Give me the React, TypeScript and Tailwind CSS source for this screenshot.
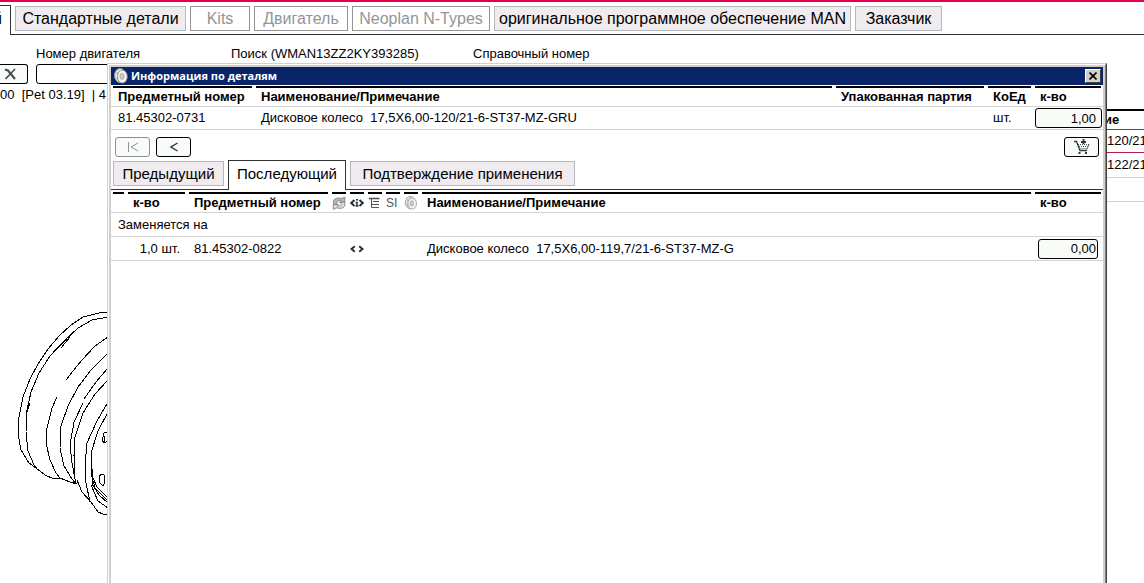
import React, { useState } from 'react';

interface TabItem {
    label: string;
    width: string;
    disabled?: boolean;
}

const mainTabs: TabItem[] = [
    { label: 'Стандартные детали', width: 'w-[171px]' },
    { label: 'Kits', width: 'w-[60px]', disabled: true },
    { label: 'Двигатель', width: 'w-[94px]', disabled: true },
    { label: 'Neoplan N-Types', width: 'w-[138px]', disabled: true },
    { label: 'оригинальное программное обеспечение MAN', width: 'w-[357px]' },
    { label: 'Заказчик', width: 'w-[87px]' },
];

const dialogTabs: TabItem[] = [
    { label: 'Предыдущий', width: 'w-[111px]' },
    { label: 'Последующий', width: 'w-[118px]' },
    { label: 'Подтверждение применения', width: 'w-[225px]' },
];

const DiscIcon: React.FC<{ className?: string }> = ({ className }) => (
    <svg viewBox="0 0 14 16" className={className} aria-hidden="true">
        <ellipse cx="6" cy="7.500" rx="5.500" ry="7" fill="#e2e2e2" stroke="#9a9a9a" />
        <ellipse cx="8.300" cy="8.600" rx="5" ry="6.400" fill="#f2f2f2" stroke="#8a8a8a" strokeWidth="0.8" />
        <ellipse cx="8" cy="8.400" rx="2" ry="3" fill="#cfcfcf" stroke="#999" strokeWidth="0.8" />
        <path d="M2.500 4.500l2 1.500M2.500 11l2-1" stroke="#888" strokeWidth="0.8" />
    </svg>
);

const ReplaceIcon = () => (
    <svg viewBox="0 0 14 14" className="w-3.5 h-3.5" aria-hidden="true">
        <path d="M1.500 8.500V4.500C3 2 6.500 1.300 9.500 2.500L12.800 1v5.500H7.500L9.200 5C7 4.200 5 4.800 4.500 8.500z" fill="#b5b5b5" stroke="#707070" strokeWidth="0.7" />
        <path d="M12.800 6v4C11 12.500 8 13 5 11.800L1.200 13.300V8.500h5.300L5 9.800c2.500.7 4.200-.3 4.800-3.800z" fill="#dadada" stroke="#707070" strokeWidth="0.7" />
    </svg>
);

const InfoIcon = () => (
    <svg viewBox="0 0 14 14" className="w-3.5 h-3.5" fill="none" stroke="#26323a" aria-hidden="true">
        <path d="M4.500 4L1.200 7l3.300 3M9.500 4l3.300 3-3.300 3" strokeWidth="2" />
        <path d="M5.500 6.500H7V10M5.500 10h3M6 3.800h2" strokeWidth="1.500" />
    </svg>
);

const ListIcon = () => (
    <svg viewBox="0 0 14 14" className="w-3.5 h-3.5" fill="none" stroke="#4a575f" aria-hidden="true">
        <path d="M1 2.500h10.500" strokeWidth="1.600" />
        <path d="M3.500 3v8.500H11M3.500 8.500H11M5 5.500h6" />
    </svg>
);

const AnglesIcon = () => (
    <svg viewBox="0 0 14 14" className="w-3.5 h-3.5" fill="none" stroke="#26323a" strokeWidth="2" aria-hidden="true">
        <path d="M4.800 4.300L1.500 7l3.300 2.700M9.200 4.300L12.500 7 9.200 9.700" />
    </svg>
);

const CartIcon = () => (
    <svg viewBox="0 0 17 16" className="w-[17px] h-4" aria-hidden="true">
        <path d="M1 2.500h2.500L7 11.500h7" fill="none" stroke="#2f3a42" strokeWidth="1.300" />
        <path d="M5 5.500h11M6 7.500h10M6.500 9.500h8" stroke="#4a555c" strokeDasharray="1 1" />
        <path d="M16 5l-2 5.500" stroke="#4a555c" strokeWidth="0.8" />
        <path d="M10.500 0v5M8 3h5" stroke="#2f3a42" strokeWidth="1.800" />
        <path d="M5.500 14h2M12 14h2" stroke="#2f3a42" strokeWidth="2" />
    </svg>
);

const WheelDrawing = () => (
    <svg
        viewBox="0 0 108 230"
        className="w-[108px] h-[230px]"
        fill="none"
        stroke="#000"
        shapeRendering="crispEdges"
        aria-hidden="true"
    >
        <path d="M108 12.500H101L83 17 71 25 59 36 48 49 38 64 30 79 23 97 19 117 18 134 21 150 29 163 36 168" />
        <path d="M108 17L92 20 78 28 63 42 50 56 39 73 31 92 27 110 26 132 28 151 34 165 37 169" />
        <path d="M71 34L58 48M70 37L61 48M30 103L27 112" />
        <path d="M36 168L45 175 54 179 60 178 70 182 77 184" />
        <path d="M108 37L95 46 82 60 73 71 66 80" />
        <path d="M57 97L52 108 47 128 46 143 50 160 56 173 60 178" />
        <path d="M108 53L91 70 78 87 68 106 61 126 60 148 64 166 72 179 76 184" />
        <path d="M108 68L96 82 84 99M83 103L74 122 70 145 72 163 76 184" />
        <path d="M108 80L95 94 83 113 75 137 74 156 75 177" />
        <path d="M108 102L97 121 87 143 85 165 86 183 90 202" />
        <path d="M108 112L98 131 91 153 91 173 95 188 108 201" />
        <path d="M77 180L82 192 91 202 98 212 103 214 108 215" />
        <path d="M92 169V184L99 195 108 203M93 178L97 187 108 198M91 185L98 201 108 208" />
        <path d="M104 133L108 132M104 133L102 141 105 143 108 140M104 136V142" />
        <path d="M101 174L104 175 105 182 103 186 100 183 99 177z" />
    </svg>
);

const Th: React.FC<{ children?: React.ReactNode; className?: string }> = ({ children, className = 'mr-1' }) => (
    <th className="p-0 text-left align-top font-bold">
        <div className={`h-5 border-t-2 border-black flex items-center whitespace-nowrap ${className}`}>
            {children}
        </div>
    </th>
);

const PartsDialog: React.FC = () => {
    const [active, setActive] = useState('Последующий');

    return (
        <div
            role="dialog"
            aria-labelledby="dialog-title"
            className="absolute top-[63px] bottom-0 left-[107px] right-[37px] border border-b-0 border-[#d4d0c8] border-r-[#404040]"
        >
            <div className="h-full border border-b-0 border-white border-r-[#808080]">
                <div className="h-full border-2 border-b-0 border-[#d4d0c8] bg-white">
                    <div className="h-[18px] bg-[#0a246a] flex items-center gap-[3px] pl-[3px] pr-0.5">
                        <DiscIcon className="w-3.5 h-4 shrink-0" />
                        <h2 id="dialog-title" className="flex-1 text-[11px] leading-4 font-bold text-white font-['Open_Sans',sans-serif]">
                            Информация по деталям
                        </h2>
                        <button
                            aria-label="×"
                            className="w-4 h-3.5 bg-[#d4d0c8] border border-white border-r-[#404040] border-b-[#404040] flex items-center justify-center"
                        >
                            <svg viewBox="0 0 8 8" className="w-2 h-2" stroke="#000" strokeWidth="1.600">
                                <path d="M.5.5l7 7M7.500.5l-7 7" />
                            </svg>
                        </button>
                    </div>

                    <table className="w-full table-fixed mt-px border-collapse">
                        <colgroup>
                            <col className="w-[145px]" />
                            <col />
                            <col className="w-[152px]" />
                            <col className="w-[47px]" />
                            <col className="w-[68px]" />
                        </colgroup>
                        <thead>
                            <tr className="border-b border-[#d4d4d4]">
                                <Th className="ml-0.5 mr-1 pl-[5px]">Предметный номер</Th>
                                <Th className="mr-1 pl-[5px]">Наименование/Примечание</Th>
                                <Th className="mr-1 pl-[5px]">Упакованная партия</Th>
                                <Th className="mr-1 pl-[5px]">КоЕд</Th>
                                <Th className="mr-0.5 pl-[5px]">к-во</Th>
                            </tr>
                        </thead>
                        <tbody>
                            <tr className="h-[23px] border-b border-[#d4d4d4]">
                                <td className="p-0 pl-[7px]">81.45302-0731</td>
                                <td className="p-0 pl-[5px] whitespace-pre">Дисковое колесо  17,5X6,00-120/21-6-ST37-MZ-GRU</td>
                                <td className="p-0" />
                                <td className="p-0 pl-[5px]">шт.</td>
                                <td className="p-0">
                                    <input
                                        aria-label="к-во"
                                        defaultValue="1,00"
                                        className="block w-[67px] h-5 pr-[5px] text-right border border-black rounded-[3px] bg-[#f8fbf8]"
                                    />
                                </td>
                            </tr>
                        </tbody>
                    </table>

                    <div className="flex items-center gap-1.5 pt-[7px] pl-1 pr-1">
                        <button disabled aria-label="|<" className="w-[35px] h-5 border border-[#8f8f8f] rounded-[3px] bg-[#f8fbf8] flex items-center justify-center">
                            <svg viewBox="0 0 12 10" className="w-3 h-2.5" fill="none" stroke="#8c9494">
                                <path d="M1.500 0v10M11 1L4 5l7 4" />
                            </svg>
                        </button>
                        <button aria-label="<" className="w-[35px] h-5 border border-black rounded-[3px] bg-[#f8fbf8] flex items-center justify-center">
                            <svg viewBox="0 0 8 10" className="w-2 h-2.5" fill="none" stroke="#26323a" strokeWidth="1.300">
                                <path d="M7.500 1L1 5l6.500 4" />
                            </svg>
                        </button>
                        <button aria-label="+" className="ml-auto w-[35px] h-5 border border-black rounded-[3px] bg-[#f8fbf8] flex items-center justify-center">
                            <CartIcon />
                        </button>
                    </div>

                    <div role="tablist" className="flex items-end gap-1 pl-0.5 h-[33px] border-b border-[#333]">
                        {dialogTabs.map((tab) => (
                            <button
                                key={tab.label}
                                role="tab"
                                aria-selected={tab.label === active}
                                onClick={() => setActive(tab.label)}
                                className={`${tab.width} text-[15px] leading-5 border whitespace-nowrap ${
                                    tab.label === active
                                        ? 'relative h-[30px] -mb-px pb-[3px] bg-white border-b-0 border-[#333]'
                                        : 'h-[25px] mb-[3px] bg-[#f0ebee] border-[#b3b8ba]'
                                }`}
                            >
                                {tab.label}
                            </button>
                        ))}
                    </div>

                    <table className="w-full table-fixed mt-0.5 border-collapse">
                        <colgroup>
                            <col className="w-[17px]" />
                            <col className="w-[61px]" />
                            <col className="w-[143px]" />
                            <col className="w-[18px]" />
                            <col className="w-[18px]" />
                            <col className="w-[18px]" />
                            <col className="w-[18px]" />
                            <col className="w-[18px]" />
                            <col />
                            <col className="w-[68px]" />
                        </colgroup>
                        <thead>
                            <tr className="border-b border-[#d4d4d4]">
                                <Th className="ml-0.5 mr-1" />
                                <Th className="mr-1 pl-[5px]">к-во</Th>
                                <Th className="mr-1 pl-[5px]">Предметный номер</Th>
                                <Th><ReplaceIcon /></Th>
                                <Th><InfoIcon /></Th>
                                <Th><ListIcon /></Th>
                                <Th className="mr-1 font-normal text-[12px] text-[#4a575f]">SI</Th>
                                <Th><DiscIcon className="w-3.5 h-3.5" /></Th>
                                <Th className="mr-1 pl-[5px]">Наименование/Примечание</Th>
                                <Th className="mr-0.5 pl-[5px]">к-во</Th>
                            </tr>
                        </thead>
                        <tbody>
                            <tr className="h-6 border-b border-[#d4d4d4]">
                                <td colSpan={10} className="p-0 pl-[7px]">Заменяется на</td>
                            </tr>
                            <tr className="h-6 border-b border-[#d4d4d4]">
                                <td className="p-0" />
                                <td className="p-0 pr-[9px] text-right whitespace-nowrap">1,0 шт.</td>
                                <td className="p-0 pl-[5px]">81.45302-0822</td>
                                <td className="p-0" />
                                <td className="p-0"><AnglesIcon /></td>
                                <td className="p-0" />
                                <td className="p-0" />
                                <td className="p-0" />
                                <td className="p-0 pl-[5px] whitespace-pre">Дисковое колесо  17,5X6,00-119,7/21-6-ST37-MZ-G</td>
                                <td className="p-0 pl-[3px]">
                                    <input
                                        aria-label="к-во"
                                        defaultValue="0,00"
                                        className="block w-[60px] h-5 pr-px text-right border border-black rounded-[3px] bg-[#f8fbf8]"
                                    />
                                </td>
                            </tr>
                        </tbody>
                    </table>
                </div>
            </div>
        </div>
    );
};

const App: React.FC = () => {
    return (
        <div className="relative h-screen overflow-hidden bg-white text-black text-[13px] leading-4 font-['Liberation_Sans',Arial,sans-serif]">
            <nav className="flex items-start gap-1 h-[35px] pt-1 border-t-2 border-t-[#e5004b] border-b border-b-[#333]">
                <button className="relative -mt-px w-[11px] h-[30px] pr-2 pb-1 flex items-center justify-end text-[16px] bg-white border-t border-r border-[#333] overflow-hidden">
                    й
                </button>
                {mainTabs.map((tab) => (
                    <button
                        key={tab.label}
                        disabled={tab.disabled}
                        className={`${tab.width} h-[25px] text-[16px] leading-5 border whitespace-nowrap ${
                            tab.disabled
                                ? 'text-[#949494] bg-white border-[#949494]'
                                : 'bg-[#f0ebee] border-[#b3b8ba]'
                        }`}
                    >
                        {tab.label}
                    </button>
                ))}
            </nav>

            <form className="flex pt-[11px]">
                <div className="w-9 pt-[18px]">
                    <button type="button" aria-label="X" className="w-7 h-5 pl-1 border border-l-0 border-black rounded-r-[3px] bg-[#f8fbf8] flex items-center">
                        <svg viewBox="0 0 12 12" className="w-3 h-3" fill="none" stroke="#4a4f55">
                            <path d="M1 1.500l3 1L11 11" strokeWidth="2.200" />
                            <path d="M11 1L1.500 11" strokeWidth="1.800" />
                        </svg>
                    </button>
                </div>
                <div className="w-[195px]">
                    <label htmlFor="engine" className="block h-[18px]">Номер двигателя</label>
                    <input id="engine" className="block w-40 h-5 border border-black rounded-[3px]" />
                </div>
                <div className="w-[242px]">Поиск (WMAN13ZZ2KY393285)</div>
                <div>Справочный номер</div>
            </form>
            <p className="pt-[3px] whitespace-pre">00  [Pet 03.19]  | 4</p>

            <div className="flex items-start justify-between pt-1.5">
                <div className="pt-[191px]">
                    <WheelDrawing />
                </div>
                <table className="w-10 table-fixed border-separate border-spacing-0 border-t-2 border-black">
                    <tbody>
                        <tr className="h-[19px]">
                            <th className="p-0 text-left border-b border-[#b5174f]">ие</th>
                        </tr>
                        <tr className="h-[23px]">
                            <td className="p-0 pl-[3px] whitespace-nowrap border-b border-[#b5174f]">120/21</td>
                        </tr>
                        <tr className="h-[25px]">
                            <td className="p-0 pl-[3px] whitespace-nowrap border-b border-[#d4d4d4]">122/21</td>
                        </tr>
                        <tr className="h-6">
                            <td className="p-0 border-b border-[#d4d4d4]" />
                        </tr>
                    </tbody>
                </table>
            </div>

            <PartsDialog />
        </div>
    );
};

export default App;
